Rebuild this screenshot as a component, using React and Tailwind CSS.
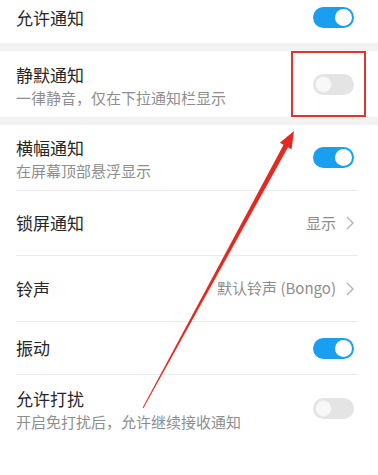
const Toggle = ({ on }) => (
  <div
    className={`w-[41px] h-[21px] rounded-full flex items-center px-[2px] ${
      on ? "bg-[#1a9ff0] justify-end" : "bg-[#e4e4e4] justify-start"
    }`}
  >
    <div
      className={`w-[17px] h-[17px] rounded-full ${
        on ? "bg-white" : "bg-[#f8f8f8] border border-[#e9e9e9]"
      }`}
    />
  </div>
);

const Value = ({ text }) => (
  <div className="flex items-center gap-[10px] text-[15px] text-[#8c8c8c]">
    <span>{text}</span>
    <svg width="8" height="14" viewBox="0 0 8 14" className="shrink-0">
      <polyline points="1,1 7,7 1,13" fill="none" stroke="#b3b3b3" strokeWidth="1.4" />
    </svg>
  </div>
);

const Row = ({ title, sub, right, h, last }) => (
  <div className={`ml-4 mr-5 ${h} flex items-center justify-between ${last ? "" : "border-b border-[#ebebeb]"}`}>
    <div className={`flex flex-col ${sub ? "pt-1" : ""}`}>
      <span className="text-[17px] leading-[22px] text-[#262626]">{title}</span>
      {sub && (
        <span className="text-[15px] leading-[22px] mt-px text-[#8e8e8e]">{sub}</span>
      )}
    </div>
    <div className="pr-1 flex items-center">{right}</div>
  </div>
);

export default function App() {
  return (
    <div
      className="relative w-[378px] h-[475px] bg-white overflow-hidden"
      style={{ fontFamily: '"Noto Sans CJK SC", "Noto Sans", sans-serif' }}
    >
      {/* allow notifications */}
      <div className="h-[43px] pb-2 pl-4 pr-6 flex items-center justify-between">
        <span className="text-[17px] text-[#262626]">允许通知</span>
        <Toggle on />
      </div>
      <div className="h-2 bg-[#f2f2f2]" />

      {/* silent */}
      <div className="relative h-[66px] pl-4 pr-6 flex items-center justify-between">
        <div className="flex flex-col pt-1">
          <span className="text-[17px] leading-[22px] text-[#262626]">静默通知</span>
          <span className="text-[15px] leading-[22px] mt-px text-[#8e8e8e]">
            一律静音，仅在下拉通知栏显示
          </span>
        </div>
        <Toggle />
        <div className="absolute right-[12px] top-0 bottom-0 w-[75px] border-2 border-[#e0342c]" />
      </div>
      <div className="h-2 bg-[#f2f2f2]" />

      <Row h="h-[66px]" title="横幅通知" sub="在屏幕顶部悬浮显示" right={<Toggle on />} />
      <Row h="h-[65px]" title="锁屏通知" right={<Value text="显示" />} />
      <Row h="h-[66px]" title="铃声" right={<Value text="默认铃声 (Bongo)" />} />
      <Row h="h-[53px]" title="振动" right={<Toggle on />} />
      <Row
        h="h-[66px]"
        title="允许打扰"
        sub="开启免打扰后，允许继续接收通知"
        right={<Toggle />}
        last
      />

      {/* annotation arrow */}
      <svg className="absolute inset-0 pointer-events-none" width="378" height="475">
        <polygon
          points="294,131 291.5,149.5 288,147.3 143.4,408.2 142.6,407.8 283.6,144.7 279.8,142.8"
          fill="#e42a20"
        />
      </svg>
    </div>
  );
}
